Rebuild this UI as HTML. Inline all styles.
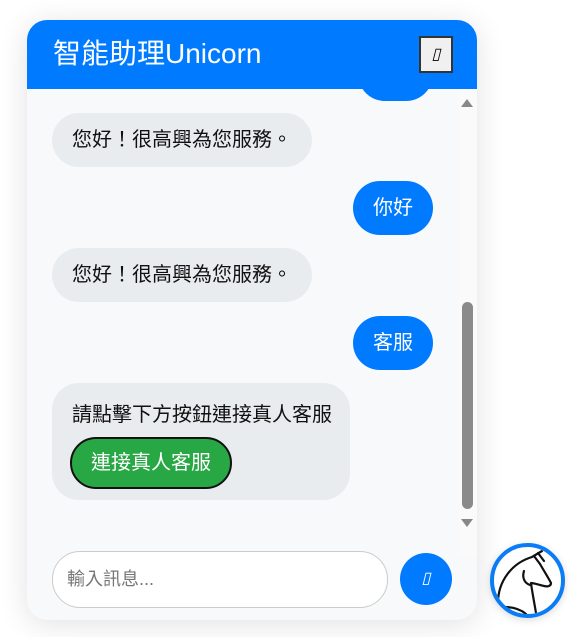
<!DOCTYPE html>
<html><head><meta charset="utf-8"><style>
*{box-sizing:border-box;margin:0;padding:0}
body{width:578px;height:637px;background:#fff;font-family:"Liberation Sans","Noto Sans CJK TC",sans-serif;position:relative;overflow:hidden}
.win{position:absolute;left:27px;top:20px;width:450px;height:600px;border-radius:20px;background:#f8f9fa;overflow:hidden;box-shadow:0 4px 30px rgba(0,0,0,0.12)}
.hdr{position:absolute;left:0;top:0;width:450px;height:69px;background:#007bff;color:#fff;font-size:28px;padding:12px 0 0 26px}
.close{position:absolute;left:392px;top:16px;width:34px;height:37px;background:#f0f0f0;border:2px solid #333;font-size:16px;color:#000;text-align:center;line-height:33px;font-style:italic}
.msgs{position:absolute;left:0;top:69px;width:431px;height:466px;overflow:hidden}
.track{position:absolute;left:431px;top:69px;width:19px;height:466px;background:#fafafa}
.thumb{position:absolute;left:435px;top:282px;width:11px;height:207px;background:#8a8a8a;border-radius:6px}
.b{position:absolute;border-radius:27px;font-size:20px;line-height:54px;height:54px;padding:0 20px;white-space:nowrap}
.bot{background:#e9ecef;color:#111;left:25px}
.user{background:#007bff;color:#fff;right:25px}
.btn{position:absolute;left:43px;top:417px;width:162px;height:52px;border-radius:26px;background:#28a745;border:2px solid #111;color:#fff;font-size:20px;text-align:center;line-height:48px}
.inp{position:absolute;left:25px;top:531px;width:336px;height:57px;border:1px solid #ccc;border-radius:28px;background:#fff;font-size:18px;color:#777;padding-left:14px;line-height:55px}
.send{position:absolute;left:373px;top:533px;width:52px;height:52px;border-radius:50%;background:#007bff;color:#fff;text-align:center;line-height:52px;font-size:16px;font-style:italic}
.uni{position:absolute;left:490px;top:543px;width:75px;height:75px;border-radius:50%;background:#fff;border:4px solid #0a7cf5;overflow:hidden;box-shadow:0 2px 8px rgba(0,0,0,0.15)}
</style></head><body>
<div class="win">
<div class="msgs">
<div class="b user" style="top:-42px;width:75px"></div>
<div class="b bot" style="top:24px">您好！很高興為您服務。</div>
<div class="b user" style="top:92px">你好</div>
<div class="b bot" style="top:159px">您好！很高興為您服務。</div>
<div class="b user" style="top:227px">客服</div>
<div style="position:absolute;left:25px;top:294px;width:298px;height:117px;background:#e9ecef;border-radius:27px"></div>
<div style="position:absolute;left:45px;top:309px;font-size:20px;color:#111;white-space:nowrap">請點擊下方按鈕連接真人客服</div>
</div>
<div class="track"></div>
<div style="position:absolute;left:434px;top:79px;width:0;height:0;border-left:6px solid transparent;border-right:6px solid transparent;border-bottom:8px solid #888"></div>
<div style="position:absolute;left:434px;top:499px;width:0;height:0;border-left:6px solid transparent;border-right:6px solid transparent;border-top:8px solid #888"></div>
<div class="thumb"></div>
<div class="btn" style="top:417px">連接真人客服</div>
<div class="hdr">智能助理Unicorn<div class="close">▯</div></div>
<div class="inp">輸入訊息...</div>
<div class="send">▯</div>
</div>
<div class="uni"><svg width="67" height="67" viewBox="0 0 67 67" fill="none" stroke="#111" stroke-width="2.2" stroke-linecap="round" stroke-linejoin="round">
<path d="M4 56 C4 34 18 16 38 10 L48 4 M44 6 L50 14 M40 9 L46 17"/>
<path d="M46 17 C50 24 54 30 57 36 C57 39 54 40 50 39 C45 38 40 36 37 36 C38 44 40 54 42 66"/>
<path d="M30 24 C28 30 30 36 36 38"/>
<path d="M10 60 C18 60 26 62 32 67"/>
</svg></div>
</body></html>
